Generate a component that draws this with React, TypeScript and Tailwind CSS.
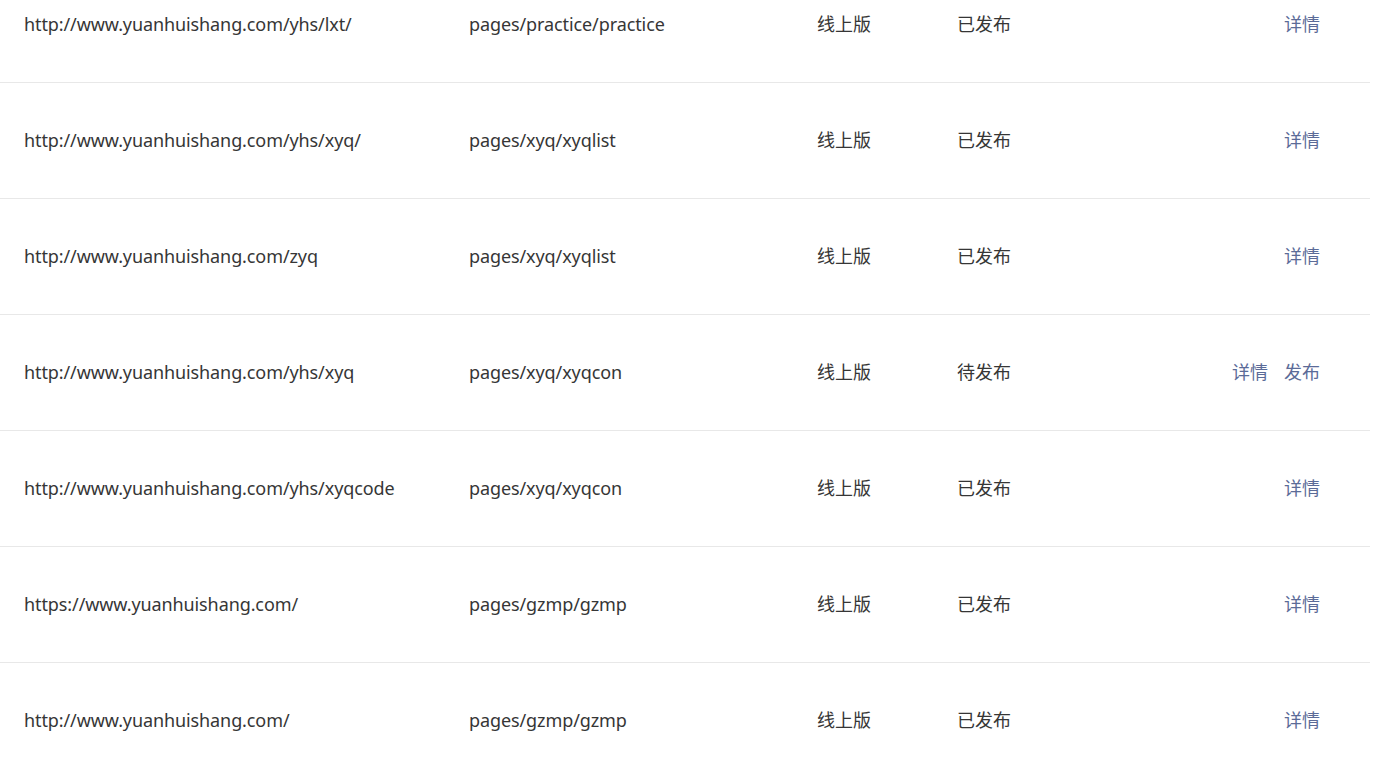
const rows = [
  { url: "http://www.yuanhuishang.com/yhs/lxt/", page: "pages/practice/practice", ver: "线上版", status: "已发布", publish: false },
  { url: "http://www.yuanhuishang.com/yhs/xyq/", page: "pages/xyq/xyqlist", ver: "线上版", status: "已发布", publish: false },
  { url: "http://www.yuanhuishang.com/zyq", page: "pages/xyq/xyqlist", ver: "线上版", status: "已发布", publish: false },
  { url: "http://www.yuanhuishang.com/yhs/xyq", page: "pages/xyq/xyqcon", ver: "线上版", status: "待发布", publish: true },
  { url: "http://www.yuanhuishang.com/yhs/xyqcode", page: "pages/xyq/xyqcon", ver: "线上版", status: "已发布", publish: false },
  { url: "https://www.yuanhuishang.com/", page: "pages/gzmp/gzmp", ver: "线上版", status: "已发布", publish: false },
  { url: "http://www.yuanhuishang.com/", page: "pages/gzmp/gzmp", ver: "线上版", status: "已发布", publish: false },
];

export default function App() {
  return (
    <div
      className="h-[776px] overflow-hidden bg-white text-[18px] text-[#363636]"
      style={{ fontFamily: '"Noto Sans", "Noto Sans CJK SC", sans-serif' }}
    >
      <div className="-mt-[33px] w-[1370px]">
        {rows.map((r, i) => (
          <div key={i} className="flex h-[116px] items-center border-b border-[#e8e8e8]">
            <div className="w-[469px] pl-6 tracking-[-0.1px]">{r.url}</div>
            <div className="w-[348px] tracking-[-0.1px]">{r.page}</div>
            <div className="w-[140px]">{r.ver}</div>
            <div className="w-[140px]">{r.status}</div>
            <div className="flex flex-1 justify-end gap-4 pr-[50px] text-[#5b6b98]">
              <span>详情</span>
              {r.publish && <span>发布</span>}
            </div>
          </div>
        ))}
      </div>
    </div>
  );
}
